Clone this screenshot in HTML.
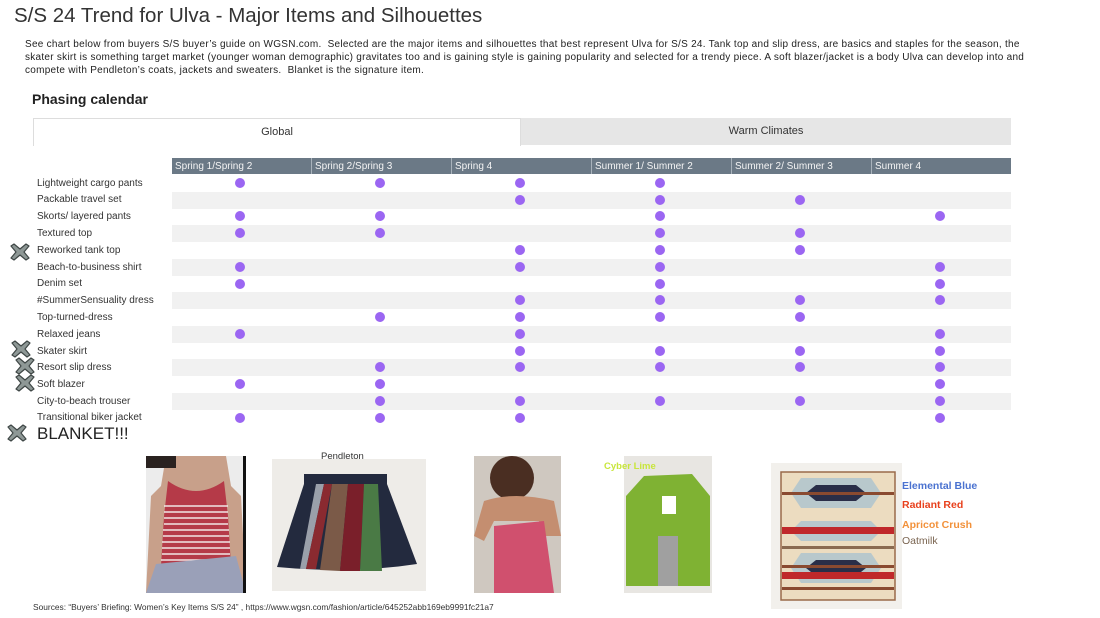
<!DOCTYPE html>
<html><head><meta charset="utf-8"><style>
*{margin:0;padding:0;box-sizing:border-box}
body{width:1100px;height:618px;background:#fff;position:relative;overflow:hidden;font-family:"Liberation Sans",sans-serif;color:#222}
.a{position:absolute}
.lbl{position:absolute;left:37px;font-size:10px;color:#333;line-height:12px}
.row{position:absolute;left:172px;width:839px;height:17px}
.g{background:#f1f1f1}
.d{position:absolute;width:10px;height:10px;border-radius:50%;background:#9b66f2}
.hd{position:absolute;top:158px;height:16px;background:#6b7986;color:#f4f4f4;font-size:10px;line-height:17px;padding-left:3px;border-right:1px solid #a8b2bb}
.x{position:absolute;width:22px;height:18px}
.bt div{white-space:nowrap;letter-spacing:0.27px}
</style></head><body>
<svg width="0" height="0" style="position:absolute"><defs><symbol id="x" viewBox="0 0 22 18"><path d="M2 3 L5 1 L11 6 L17 1 L20 3 L15 9 L20 15 L17 17 L11 12 L5 17 L2 15 L7 9Z" fill="#8e9896" stroke="#3f4746" stroke-width="1.2" stroke-linejoin="round"/></symbol></defs></svg>
<div class="a" style="left:14px;top:4px;font-size:20.5px;color:#333">S/S 24 Trend for Ulva - Major Items and Silhouettes</div>
<div class="a bt" style="left:25px;top:38px;font-size:10px;line-height:13px;color:#222">
<div>See chart below from buyers S/S buyer’s guide on WGSN.com.&nbsp; Selected are the major items and silhouettes that best represent Ulva for S/S 24. Tank top and slip dress, are basics and staples for the season, the</div>
<div>skater skirt is something target market (younger woman demographic) gravitates too and is gaining style is gaining popularity and selected for a trendy piece. A soft blazer/jacket is a body Ulva can develop into and</div>
<div>compete with Pendleton’s coats, jackets and sweaters.&nbsp; Blanket is the signature item.</div>
</div>
<div class="a" style="left:32px;top:91px;font-size:14px;font-weight:bold;color:#222">Phasing calendar</div>
<div class="a" style="left:33px;top:118px;width:488px;height:28px;border:1px solid #ddd;border-bottom:none;font-size:11px;text-align:center;line-height:26px;color:#333">Global</div>
<div class="a" style="left:521px;top:118px;width:490px;height:27px;background:#e6e6e6;font-size:11px;text-align:center;line-height:27px;color:#333">Warm Climates</div>

<div class="hd" style="left:172px;width:140px">Spring 1/Spring 2</div>
<div class="hd" style="left:312px;width:140px">Spring 2/Spring 3</div>
<div class="hd" style="left:452px;width:140px">Spring 4</div>
<div class="hd" style="left:592px;width:140px">Summer 1/ Summer 2</div>
<div class="hd" style="left:732px;width:140px">Summer 2/ Summer 3</div>
<div class="hd" style="left:872px;width:139px;border-right:none">Summer 4</div>

<div class="row g" style="top:192px"></div>
<div class="row g" style="top:225px"></div>
<div class="row g" style="top:259px"></div>
<div class="row g" style="top:292px"></div>
<div class="row g" style="top:326px"></div>
<div class="row g" style="top:359px"></div>
<div class="row g" style="top:393px"></div>

<div class="lbl" style="top:178px">Lightweight cargo pants</div>
<div class="lbl" style="top:194px">Packable travel set</div>
<div class="lbl" style="top:211px">Skorts/ layered pants</div>
<div class="lbl" style="top:228px">Textured top</div>
<div class="lbl" style="top:245px">Reworked tank top</div>
<div class="lbl" style="top:262px">Beach-to-business shirt</div>
<div class="lbl" style="top:278px">Denim set</div>
<div class="lbl" style="top:295px">#SummerSensuality dress</div>
<div class="lbl" style="top:312px">Top-turned-dress</div>
<div class="lbl" style="top:329px">Relaxed jeans</div>
<div class="lbl" style="top:346px">Skater skirt</div>
<div class="lbl" style="top:362px">Resort slip dress</div>
<div class="lbl" style="top:379px">Soft blazer</div>
<div class="lbl" style="top:396px">City-to-beach trouser</div>
<div class="lbl" style="top:412px">Transitional biker jacket</div>
<div class="a" style="left:37px;top:424px;font-size:17px;color:#222">BLANKET!!!</div>

<svg class="x" style="left:9px;top:243px"><use href="#x"/></svg>
<svg class="x" style="left:10px;top:340px"><use href="#x"/></svg>
<svg class="x" style="left:14px;top:357px"><use href="#x"/></svg>
<svg class="x" style="left:14px;top:374px"><use href="#x"/></svg>
<svg class="x" style="left:6px;top:424px"><use href="#x"/></svg>

<div class="d" style="left:235px;top:178px"></div><div class="d" style="left:375px;top:178px"></div><div class="d" style="left:515px;top:178px"></div><div class="d" style="left:655px;top:178px"></div>
<div class="d" style="left:515px;top:195px"></div><div class="d" style="left:655px;top:195px"></div><div class="d" style="left:795px;top:195px"></div>
<div class="d" style="left:235px;top:211px"></div><div class="d" style="left:375px;top:211px"></div><div class="d" style="left:655px;top:211px"></div><div class="d" style="left:935px;top:211px"></div>
<div class="d" style="left:235px;top:228px"></div><div class="d" style="left:375px;top:228px"></div><div class="d" style="left:655px;top:228px"></div><div class="d" style="left:795px;top:228px"></div>
<div class="d" style="left:515px;top:245px"></div><div class="d" style="left:655px;top:245px"></div><div class="d" style="left:795px;top:245px"></div>
<div class="d" style="left:235px;top:262px"></div><div class="d" style="left:515px;top:262px"></div><div class="d" style="left:655px;top:262px"></div><div class="d" style="left:935px;top:262px"></div>
<div class="d" style="left:235px;top:279px"></div><div class="d" style="left:655px;top:279px"></div><div class="d" style="left:935px;top:279px"></div>
<div class="d" style="left:515px;top:295px"></div><div class="d" style="left:655px;top:295px"></div><div class="d" style="left:795px;top:295px"></div><div class="d" style="left:935px;top:295px"></div>
<div class="d" style="left:375px;top:312px"></div><div class="d" style="left:515px;top:312px"></div><div class="d" style="left:655px;top:312px"></div><div class="d" style="left:795px;top:312px"></div>
<div class="d" style="left:235px;top:329px"></div><div class="d" style="left:515px;top:329px"></div><div class="d" style="left:935px;top:329px"></div>
<div class="d" style="left:515px;top:346px"></div><div class="d" style="left:655px;top:346px"></div><div class="d" style="left:795px;top:346px"></div><div class="d" style="left:935px;top:346px"></div>
<div class="d" style="left:375px;top:362px"></div><div class="d" style="left:515px;top:362px"></div><div class="d" style="left:655px;top:362px"></div><div class="d" style="left:795px;top:362px"></div><div class="d" style="left:935px;top:362px"></div>
<div class="d" style="left:235px;top:379px"></div><div class="d" style="left:375px;top:379px"></div><div class="d" style="left:935px;top:379px"></div>
<div class="d" style="left:375px;top:396px"></div><div class="d" style="left:515px;top:396px"></div><div class="d" style="left:655px;top:396px"></div><div class="d" style="left:795px;top:396px"></div><div class="d" style="left:935px;top:396px"></div>
<div class="d" style="left:235px;top:413px"></div><div class="d" style="left:375px;top:413px"></div><div class="d" style="left:515px;top:413px"></div><div class="d" style="left:935px;top:413px"></div>

<svg class="a" style="left:146px;top:456px" width="100" height="137">
<rect width="100" height="137" fill="#ececec"/>
<path d="M20 0 L80 0 L85 30 L95 40 L100 137 L0 137 L5 40 L15 30Z" fill="#c8a08a"/>
<path d="M22 25 Q50 45 78 25 L82 60 L85 110 L15 110 L18 60Z" fill="#b53a48"/>
<g stroke="#f2e6e6" stroke-width="1.5"><line x1="18" y1="50" x2="82" y2="50"/><line x1="18" y1="56" x2="82" y2="56"/><line x1="18" y1="62" x2="82" y2="62"/><line x1="18" y1="68" x2="82" y2="68"/><line x1="17" y1="74" x2="83" y2="74"/><line x1="17" y1="80" x2="83" y2="80"/><line x1="16" y1="86" x2="84" y2="86"/><line x1="16" y1="92" x2="84" y2="92"/><line x1="16" y1="98" x2="84" y2="98"/><line x1="15" y1="104" x2="85" y2="104"/></g>
<path d="M10 108 L90 100 L100 137 L0 137Z" fill="#9aa0b8"/>
<rect x="0" y="0" width="30" height="12" fill="#2a2220"/><rect x="97" y="0" width="3" height="137" fill="#111"/>
</svg>
<div class="a" style="left:321px;top:451px;font-size:9.5px;color:#333">Pendleton</div>
<svg class="a" style="left:272px;top:459px" width="154" height="132">
<rect width="154" height="132" fill="#eeece8"/>
<path d="M32 15 L115 15 L115 25 L145 105 Q80 115 5 108 L32 25Z" fill="#232a3e"/>
<path d="M44 25 L52 25 L34 110 L28 110Z" fill="#9aa0aa"/><path d="M52 25 L60 25 L44 110 L34 110Z" fill="#8a2a30"/>
<path d="M60 25 L76 25 L68 112 L48 111Z" fill="#7b5a48"/><path d="M76 25 L92 25 L88 112 L68 112Z" fill="#7a1f2a"/><path d="M92 25 L106 25 L110 112 L88 112Z" fill="#4a7a45"/>
</svg>
<svg class="a" style="left:474px;top:456px" width="87" height="137">
<rect width="87" height="137" fill="#cfc8c0"/>
<circle cx="38" cy="22" r="22" fill="#4a2e22"/>
<path d="M10 45 Q40 35 80 45 L87 80 L70 80 L65 65 L20 65 L10 85 L0 80Z" fill="#c48e70"/>
<path d="M20 70 L70 65 L80 137 L20 137Z" fill="#d0506e"/>
</svg>
<svg class="a" style="left:624px;top:456px" width="88" height="137">
<rect width="88" height="137" fill="#e8e6e2"/>
<path d="M20 20 L68 18 L86 40 L86 130 L2 130 L2 40Z" fill="#7fb233"/>
<rect x="38" y="40" width="14" height="18" fill="#fff"/><rect x="34" y="80" width="20" height="50" fill="#a0a0a0"/>
</svg>
<div class="a" style="left:604px;top:461px;font-size:9.5px;font-weight:bold;color:#c8e63c">Cyber Lime</div>
<svg class="a" style="left:771px;top:463px" width="131" height="146">
<rect width="131" height="146" fill="#f2f0ec"/>
<rect x="10" y="9" width="114" height="128" fill="#ecdcc0" stroke="#9a6a4a" stroke-width="1.5"/>
<g><path d="M30 15 L100 15 L110 30 L100 45 L30 45 L20 30Z" fill="#b8c8cc"/><path d="M45 22 L85 22 L95 30 L85 38 L45 38 L35 30Z" fill="#2a2e48"/>
<path d="M30 58 L100 58 L110 68 L100 78 L30 78 L20 68Z" fill="#b8c8cc"/>
<path d="M30 90 L100 90 L110 105 L100 120 L30 120 L20 105Z" fill="#b8c8cc"/><path d="M45 97 L85 97 L95 105 L85 113 L45 113 L35 105Z" fill="#2a2e48"/></g>
<rect x="11" y="29" width="112" height="3" fill="#8a4a30"/><rect x="11" y="64" width="112" height="7" fill="#c0282a"/><rect x="11" y="102" width="112" height="3" fill="#8a4a30"/><rect x="11" y="83" width="112" height="3" fill="#8a6a50"/><rect x="11" y="109" width="112" height="7" fill="#c0282a"/><rect x="11" y="124" width="112" height="3" fill="#8a4a30"/>
</svg>
<div class="a" style="left:902px;top:480px;font-size:10.5px;font-weight:bold;color:#4a72d0">Elemental Blue</div>
<div class="a" style="left:902px;top:499px;font-size:10.5px;font-weight:bold;color:#e8401c">Radiant Red</div>
<div class="a" style="left:902px;top:519px;font-size:10.5px;font-weight:bold;color:#f2913a">Apricot Crush</div>
<div class="a" style="left:902px;top:535px;font-size:10.5px;color:#7a6450">Oatmilk</div>

<div class="a" style="left:33px;top:602px;font-size:8.4px;color:#333">Sources: “Buyers’ Briefing: Women’s Key Items S/S 24” , https://www.wgsn.com/fashion/article/645252abb169eb9991fc21a7</div>
</body></html>
